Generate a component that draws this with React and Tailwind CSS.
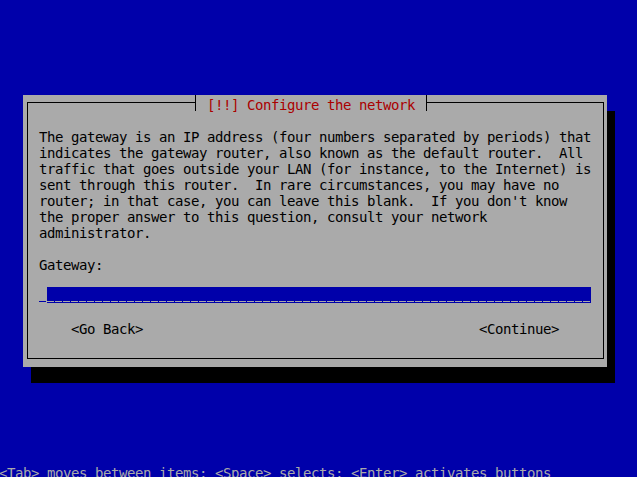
const mono = { fontFamily: '"DejaVu Sans Mono", "Liberation Mono", monospace' };

const body = [
  "The gateway is an IP address (four numbers separated by periods) that",
  "indicates the gateway router, also known as the default router.  All",
  "traffic that goes outside your LAN (for instance, to the Internet) is",
  "sent through this router.  In rare circumstances, you may have no",
  "router; in that case, you can leave this blank.  If you don't know",
  "the proper answer to this question, consult your network",
  "administrator.",
];

function Line({ children, className = "" }) {
  return (
    <div className={"h-4 leading-[20px] whitespace-pre text-[14px] tracking-[-0.43px] " + className}>
      {children}
    </div>
  );
}

export default function App() {
  return (
    <div className="w-screen h-screen overflow-hidden bg-[#0000aa]" style={mono}>
      <div className="w-[640px] h-[480px] -mt-px -ml-px flex flex-col">
        <div className="pt-[96px] pl-[24px]">
          <div className="w-[584px] h-[272px] bg-[#aaaaaa] pt-[7px] pl-[4px] pr-[3px] pb-[8px] flex shadow-[8px_16px_0_0_#000]">
            <div className="flex-1 border border-black flex flex-col">
              <div className="-mt-[8px] ml-[167px] self-start h-4 bg-[#aaaaaa] border-x border-black px-[3px]">
                <Line className="text-[#aa0000]">{" [!!] Configure the network "}</Line>
              </div>
              <div className="mt-4 pl-[11px] flex flex-col text-black">
                {body.map((l, i) => (
                  <Line key={i}>{l}</Line>
                ))}
                <Line className="mt-4">Gateway:</Line>
                <div className="mt-4 h-4 flex">
                  <div className="w-2 h-4 flex items-start">
                    <div className="mt-[14px] w-[7px] h-px bg-[#0000aa]" />
                  </div>
                  <div className="w-[544px] h-4 bg-[#0000aa] flex items-start">
                    <div className="mt-[14px] w-full h-px bg-[repeating-linear-gradient(90deg,#aaaaaa_0px,#aaaaaa_7px,transparent_7px,transparent_8px)]" />
                  </div>
                </div>
                <div className="mt-4 flex">
                  <Line className="ml-8">{"<Go Back>"}</Line>
                  <Line className="ml-auto mr-[44px]">{"<Continue>"}</Line>
                </div>
              </div>
            </div>
          </div>
        </div>
        <div className="mt-auto">
          <Line className="text-[#aaaaaa]">
            {"<Tab> moves between items; <Space> selects; <Enter> activates buttons"}
          </Line>
        </div>
      </div>
    </div>
  );
}
